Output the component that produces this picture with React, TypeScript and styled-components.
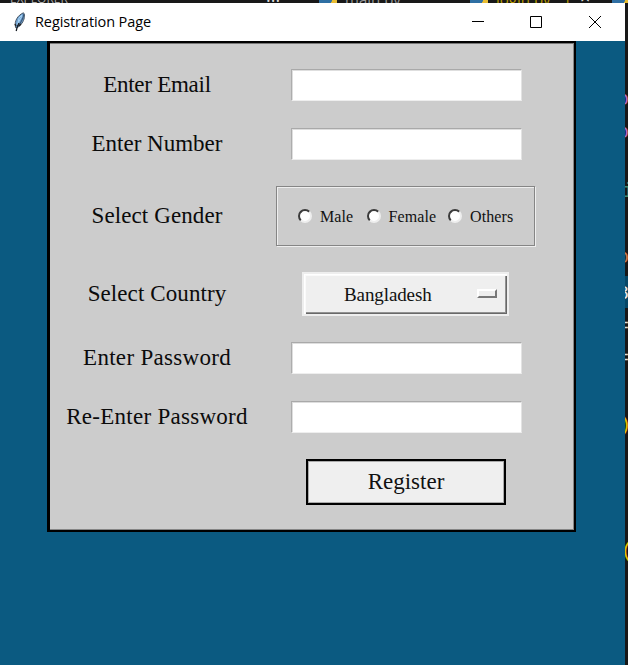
import React, { useState } from "react";
import styled, { createGlobalStyle } from "styled-components";

const GlobalStyle = createGlobalStyle`
  * { box-sizing: border-box; }
  html, body { margin: 0; padding: 0; }
  body { width: 628px; height: 665px; overflow: hidden; background: #181818; }
`;

const serif = `"Liberation Serif", "Times New Roman", serif`;
const sans = `"Open Sans", "Noto Sans", sans-serif`;

const Desktop = styled.div`
  display: grid;
  grid-template: 3px 662px / 625px 3px;
  width: 628px;
  height: 665px;
  background: #181818;
  overflow: hidden;
`;

const EditorTabs = styled.div`
  grid-column: 1 / 3;
  display: flex;
  height: 3px;
  overflow: hidden;
`;

const TabText = styled.span<{ $width: number; $color: string; $size: number; $inset?: number; $lift?: number }>`
  flex: none;
  width: ${(p) => p.$width}px;
  height: 20px;
  margin-top: -${(p) => p.$lift ?? 11}px;
  padding-left: ${(p) => p.$inset ?? 0}px;
  color: ${(p) => p.$color};
  font: ${(p) => p.$size}px/20px ${sans};
  white-space: nowrap;
`;

const PythonMark = styled.span<{ $gap: number }>`
  flex: none;
  width: 18px;
  height: 3px;
  margin-right: ${(p) => p.$gap}px;
  background: linear-gradient(105deg, #2f6fa3 68%, #e9bd32 70%);
`;

const Window = styled.main`
  display: flex;
  flex-direction: column;
  width: 625px;
  height: 662px;
  background: #0b5a81;
`;

const TitleBar = styled.header`
  display: flex;
  flex: none;
  align-items: center;
  height: 38px;
  padding: 0 1px 0 12px;
  background: #fff;
`;

const Title = styled.h1`
  flex: 1;
  margin: 0 0 0 7px;
  color: #000;
  font: 400 14.5px/20px ${sans};
  letter-spacing: -0.1px;
  white-space: nowrap;
`;

const WindowButton = styled.button`
  display: grid;
  place-items: center;
  width: 58.5px;
  height: 38px;
  padding: 0;
  border: 0;
  background: transparent;
`;

const Card = styled.form`
  display: grid;
  grid-template-columns: 214px 284px;
  grid-template-rows: 58px 59px 86px 70px 58px 59px 72px;
  place-items: center;
  align-content: start;
  width: 529px;
  height: 491px;
  margin-left: 47px;
  padding-top: 13px;
  border: 2px solid #000;
  border-left-width: 3px;
  background: #ccc;
  box-shadow: inset -1px -1px #858585, inset 0 1px #777;
`;

const Label = styled.label<{ $spacing?: number }>`
  color: #0b0b0b;
  font: 23px/28px ${serif};
  letter-spacing: ${(p) => p.$spacing ?? 0}px;
  white-space: nowrap;
`;

const Entry = styled.input`
  width: 231px;
  height: 32px;
  padding: 2px 4px;
  border: 1px solid;
  border-color: #a9a9a9 #e3e3e3 #eee #adadad;
  border-radius: 0;
  outline: 0;
  background: #fff;
  box-shadow: inset 1px 1px #dedede;
  font: 20px ${serif};
`;

const GenderGroup = styled.div`
  display: flex;
  align-items: center;
  width: 259px;
  height: 60px;
  margin-right: 1px;
  padding-left: 21px;
  border: 1px solid #858585;
  box-shadow: inset 1px 1px #eee, 1px 1px #eee;
`;

const Choice = styled.label<{ $width: number }>`
  display: flex;
  align-items: center;
  width: ${(p) => p.$width}px;
  gap: 8px;
  color: #111;
  font: 16px/20px ${serif};
  letter-spacing: 0.1px;
`;

const ChoiceName = styled.span`
  padding-top: 2px;
`;

const Radio = styled.input`
  appearance: none;
  flex: none;
  width: 14px;
  height: 14px;
  margin: 0;
  border: 2px solid;
  border-color: #3a3a3a #eee #eee #3a3a3a;
  border-radius: 50%;
  background: #fff;
  &:checked { background: radial-gradient(#000 2.5px, #fff 3px); }
`;

const CountryMenu = styled.button`
  display: flex;
  align-items: center;
  width: 207px;
  height: 44px;
  margin-right: 1px;
  padding: 0 10px 0 40px;
  border: 2px solid #eee;
  border-radius: 0;
  background: #efefef;
  box-shadow: inset 1px 1px #fff, inset 2px 2px #fafafa, inset -1px -1px #686868, inset -2px -2px #929292;
  color: #111;
  font: 19px/24px ${serif};
  letter-spacing: -0.1px;
`;

const CountryName = styled.span`
  flex: 1;
  padding-top: 1px;
  text-align: left;
`;

const MenuIndicator = styled.span`
  width: 20px;
  height: 9px;
  margin-top: -2px;
  border: 2px solid;
  border-color: #fff #777 #777 #fff;
  background: #eee;
`;

const RegisterButton = styled.button`
  grid-column: 2;
  width: 200px;
  height: 46px;
  padding: 0;
  border: 2px solid #000;
  border-radius: 0;
  background: #efefef;
  box-shadow: inset 0 0 0 1px #aaa;
  color: #111;
  font: 23px/28px ${serif};
`;

const CodeEdge = styled.aside`
  display: flex;
  flex-direction: column;
  width: 3px;
  height: 662px;
  overflow: hidden;
  background: #181818;
`;

const CodeGlyph = styled.span<{ $color: string; $above: number; $fill?: string; $shift?: number }>`
  flex: none;
  height: 32px;
  margin-top: ${(p) => p.$above}px;
  color: ${(p) => p.$color};
  background: ${(p) => p.$fill ?? "transparent"};
  font: 20px/35px "Liberation Mono", monospace;
  text-indent: ${(p) => p.$shift ?? -8}px;
  white-space: nowrap;
`;

const FeatherIcon = () => (
  <svg width="16" height="22" viewBox="0 0 16 22" aria-hidden="true">
    <path d="M3.5 16C2 10 6 4 11.5 1.8c1.8 2.2.8 7.2-1.4 10.2-1.6 2.3-3.8 4.2-6 5.2Z" fill="#6fa0d0" stroke="#4a5663" />
    <path d="m6 12 1-5 3-3M5 14l5-9" fill="none" stroke="#a8d4f6" />
    <path d="M12 3C11 8 8 13 5 16.500" fill="none" stroke="#3a5878" strokeWidth="1.2" />
    <path d="M7 12C5.500 14.500 4.800 17 4.200 20" fill="none" stroke="#151b22" strokeWidth="1.3" />
    <path d="m4 15-1-2m6 0-2 2" stroke="#222" strokeWidth="1.4" />
  </svg>
);

const controls = [
  { name: "Minimize", path: "M0 5.5h12" },
  { name: "Maximize", path: "M.5.5h11v11H.5z" },
  { name: "Close", path: "m0 0 12 12M12 0 0 12" },
];

const genders = [
  { name: "Male", width: 68.5 },
  { name: "Female", width: 81.5 },
  { name: "Others", width: 78 },
];

const codeGlyphs = [
  { text: "o", color: "#b76ac0", above: 79 },
  { text: "o", color: "#b76ac0", above: 1 },
  { text: "i", color: "#3f8c70", above: 27, shift: -3 },
  { text: "o", color: "#c77850", above: 34 },
  { text: "8", color: "#e8e8e8", above: 4, fill: "#064766" },
  { text: "=", color: "#ddd", above: 1 },
  { text: "=", color: "#ddd", above: 0 },
  { text: ")", color: "#e5bf00", above: 35, shift: -6 },
  { text: "(", color: "#e5bf00", above: 94, shift: -4 },
];

export default function App() {
  const [gender, setGender] = useState("");
  return (
    <>
      <GlobalStyle />
      <Desktop>
        <EditorTabs>
          <TabText $width={266} $color="#aaa" $size={12} $inset={10}>EXPLORER</TabText>
          <TabText $width={53} $color="#ddd" $size={18} $lift={10}>···</TabText>
          <PythonMark $gap={8} />
          <TabText $width={125} $color="#999" $size={15}>main.py</TabText>
          <PythonMark $gap={8} />
          <TabText $width={67} $color="#b99a00" $size={15}>login.py</TabText>
          <TabText $width={17} $color="#b99a00" $size={15}>1</TabText>
          <TabText $width={32} $color="#ddd" $size={18} $lift={13}>×</TabText>
          <PythonMark $gap={0} />
        </EditorTabs>
        <Window>
          <TitleBar>
            <FeatherIcon />
            <Title>Registration Page</Title>
            {controls.map(({ name, path }) => (
              <WindowButton key={name} aria-label={name}>
                <svg width="12" height="12" viewBox="0 0 12 12">
                  <path d={path} fill="none" stroke="#000" />
                </svg>
              </WindowButton>
            ))}
          </TitleBar>
          <Card onSubmit={(e) => e.preventDefault()}>
            <Label htmlFor="email" $spacing={-0.25}>Enter Email</Label>
            <Entry id="email" />
            <Label htmlFor="number">Enter Number</Label>
            <Entry id="number" />
            <Label as="span" $spacing={0.1}>Select Gender</Label>
            <GenderGroup>
              {genders.map(({ name, width }) => (
                <Choice key={name} $width={width}>
                  <Radio type="radio" name="gender" checked={gender === name} onChange={() => setGender(name)} />
                  <ChoiceName>{name}</ChoiceName>
                </Choice>
              ))}
            </GenderGroup>
            <Label as="span" $spacing={0.1}>Select Country</Label>
            <CountryMenu type="button">
              <CountryName>Bangladesh</CountryName>
              <MenuIndicator />
            </CountryMenu>
            <Label htmlFor="password" $spacing={0.3}>Enter Password</Label>
            <Entry id="password" type="password" />
            <Label htmlFor="confirm" $spacing={0.27}>Re-Enter Password</Label>
            <Entry id="confirm" type="password" />
            <RegisterButton>Register</RegisterButton>
          </Card>
        </Window>
        <CodeEdge>
          {codeGlyphs.map(({ text, color, above, fill, shift }) => (
            <CodeGlyph key={above + text} $color={color} $above={above} $fill={fill} $shift={shift}>{text}</CodeGlyph>
          ))}
        </CodeEdge>
      </Desktop>
    </>
  );
}
